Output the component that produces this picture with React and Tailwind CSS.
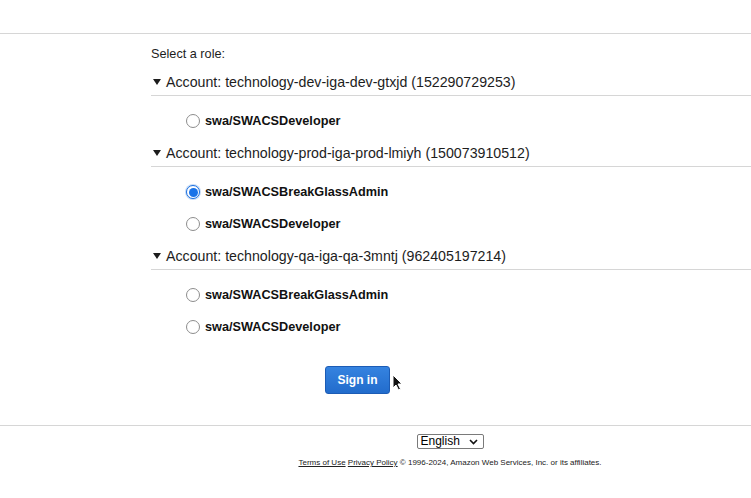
const accounts = [
  {
    name: "technology-dev-iga-dev-gtxjd",
    id: "152290729253",
    roles: ["swa/SWACSDeveloper"],
  },
  {
    name: "technology-prod-iga-prod-lmiyh",
    id: "150073910512",
    roles: ["swa/SWACSBreakGlassAdmin", "swa/SWACSDeveloper"],
  },
  {
    name: "technology-qa-iga-qa-3mntj",
    id: "962405197214",
    roles: ["swa/SWACSBreakGlassAdmin", "swa/SWACSDeveloper"],
  },
];

const selected = "150073910512:swa/SWACSBreakGlassAdmin";

function Radio({ checked }) {
  if (checked) {
    return (
      <span className="flex h-[14px] w-[14px] items-center justify-center rounded-full border border-[#1a6fe0] bg-white shadow-[0_0_0_1px_rgba(26,111,224,0.25)]">
        <span className="h-[9px] w-[9px] rounded-full bg-[#1a73e8]" />
      </span>
    );
  }
  return <span className="h-[14px] w-[14px] rounded-full border border-[#8d8d8d] bg-white" />;
}

export default function App() {
  return (
    <div className="relative h-[498px] w-[751px] overflow-hidden bg-white font-['Liberation_Sans',Arial,sans-serif] text-[#1d1d1d]">
      {/* Header spacer */}
      <div className="h-[34px] border-b border-[#d6d6d6]" />

      {/* Role picker */}
      <div className="pl-[151px]">
        <p className="mt-[10px] text-[12.7px] leading-[20px]">Select a role:</p>

        {accounts.map((acc, i) => (
          <div key={acc.id}>
            <div
              className={`flex items-center border-b border-[#d6d6d6] pb-[3px] ${i === 0 ? "mt-[8px]" : "mt-[12px]"}`}
            >
              <svg width="8" height="6" viewBox="0 0 8 6" className="ml-[2px] mr-[5px]">
                <polygon points="0,0 8,0 4,6" fill="#1d1d1d" />
              </svg>
              <span className="text-[14.2px] leading-[20px]">
                Account: {acc.name} ({acc.id})
              </span>
            </div>
            <div className="flex flex-col gap-[12px] pt-[15px]">
              {acc.roles.map((role) => (
                <label key={role} className="flex h-[20px] items-center pl-[35px]">
                  <Radio checked={`${acc.id}:${role}` === selected} />
                  <span className="ml-[5px] text-[12.7px] font-bold leading-[20px] text-[#111]">{role}</span>
                </label>
              ))}
            </div>
          </div>
        ))}

        <button className="ml-[174px] mt-[29px] flex h-[28px] w-[65px] items-center justify-center rounded-[3px] border border-[#1c5cb5] bg-gradient-to-b from-[#3583e0] to-[#226ccc] text-[12px] font-bold text-white">
          Sign in
        </button>
      </div>

      {/* Footer */}
      <div className="mt-[31px] border-t border-[#d6d6d6]">
        <div className="flex flex-col items-center pl-[149px]">
          <div className="mt-[8px] flex h-[15px] w-[67px] items-center justify-between rounded-[2px] border border-[#7a7a7a] bg-white pl-[3px] pr-[5px] text-[12px] leading-[13px] text-black">
            <span>English</span>
            <svg width="9" height="6" viewBox="0 0 9 6">
              <polyline points="1,1 4.5,4.5 8,1" fill="none" stroke="#111" strokeWidth="1.6" />
            </svg>
          </div>
          <p className="mt-[8px] text-[8px] leading-[12px] text-[#222]">
            <a className="underline">Terms of Use</a> <a className="underline">Privacy Policy</a> © 1996-2024, Amazon Web
            Services, Inc. or its affiliates.
          </p>
        </div>
      </div>

      {/* Mouse cursor */}
      <svg className="absolute left-[392px] top-[374px]" width="11" height="17" viewBox="0 0 11 17">
        <path d="M1 1 L1 14 L4 11 L6.5 16 L8.5 15 L6 10 L10 10 Z" fill="#111" stroke="#fff" strokeWidth="1" />
      </svg>
    </div>
  );
}
